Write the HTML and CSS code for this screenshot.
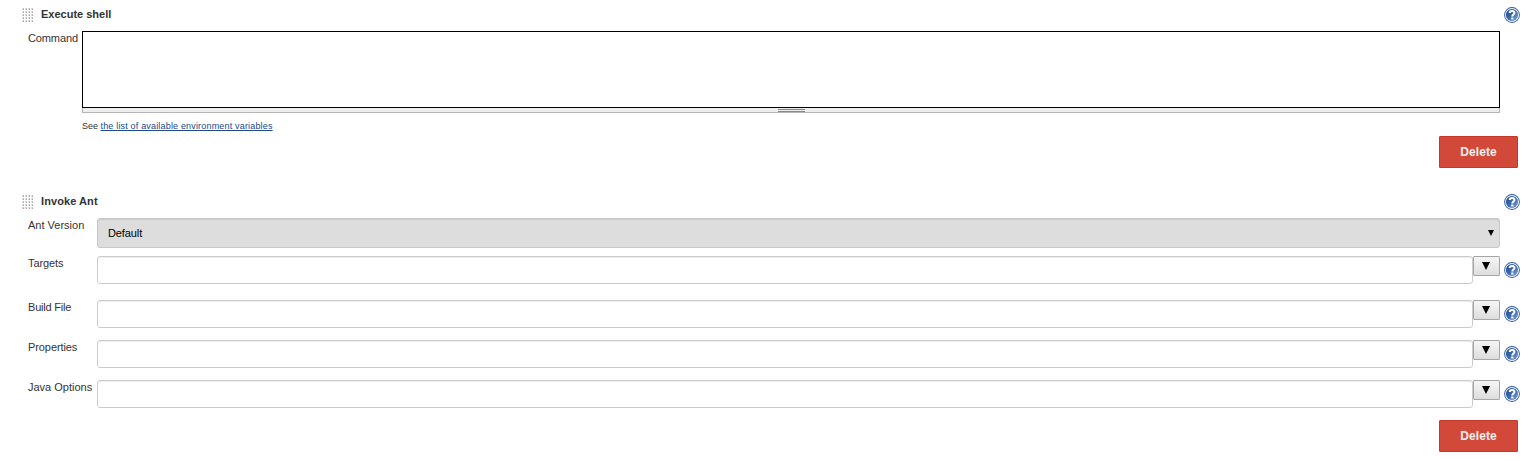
FILE: index.html
```html
<!DOCTYPE html>
<html lang="en">
<head>
<meta charset="utf-8">
<title>Build steps</title>
<link rel="stylesheet" href="styles.css">
</head>
<body>
<svg class="defs" width="0" height="0" aria-hidden="true">
  <defs>
    <linearGradient id="disc" x1="0" y1="0" x2="1" y2="1">
      <stop offset="0" stop-color="#1f4b8b"/>
      <stop offset=".45" stop-color="#3865a5"/>
      <stop offset="1" stop-color="#86a8d2"/>
    </linearGradient>
    <symbol id="help" viewBox="0 0 16 16">
      <circle cx="8" cy="8" r="7.900" fill="#2f5c9a"/>
      <circle cx="8" cy="8" r="7" fill="#f2f6fb"/>
      <circle cx="8" cy="8" r="6.100" fill="url(#disc)"/>
      <path d="M5.700 6C5.700 4.500 6.700 3.900 8.100 3.900c1.500 0 2.300.8 2.300 2 0 1.700-2.100 1.700-2.100 3.600" fill="none" stroke="#fff" stroke-width="2"/>
      <rect x="7.200" y="10.500" width="2.200" height="2" fill="#fff"/>
    </symbol>
    <symbol id="arrow" viewBox="0 0 8 8"><path d="M0 0h8L4 8z" fill="#000"/></symbol>
    <pattern id="dots" width="3" height="3" patternUnits="userSpaceOnUse">
      <rect width="2" height="2" fill="#dedede"/>
      <rect x="1" y="0" width="1" height="1" fill="#c4c4bc"/>
      <rect x="1" y="1" width="1" height="1" fill="#aaa"/>
    </pattern>
    <symbol id="grip" viewBox="0 0 12 14"><rect width="12" height="14" fill="url(#dots)"/></symbol>
  </defs>
</svg>
<main class="steps">
  <section class="step">
    <header class="step-head"><svg class="grip"><use href="#grip"/></svg><h2>Execute shell</h2><svg class="help"><use href="#help"/></svg></header>
    <div class="row shell">
      <label class="label" for="cmd">Command</label>
      <div class="control">
        <textarea id="cmd" class="command"></textarea>
        <div class="resizer"><span></span></div>
        <p class="note">See <a href="#">the list of available environment variables</a></p>
      </div>
    </div>
    <div class="actions"><button class="delete">Delete</button></div>
  </section>
  <section class="step ant">
    <header class="step-head"><svg class="grip"><use href="#grip"/></svg><h2>Invoke Ant</h2><svg class="help"><use href="#help"/></svg></header>
    <div class="row version">
      <span class="label">Ant Version</span>
      <div class="select"><span>Default</span><svg class="caret"><use href="#arrow"/></svg></div>
    </div>
    <div class="row targets">
      <label class="label tight" for="targets">Targets</label>
      <input id="targets" class="text"><button class="expand" aria-label="Expand"><svg><use href="#arrow"/></svg></button><svg class="help"><use href="#help"/></svg>
    </div>
    <div class="row">
      <label class="label tighter" for="file">Build File</label>
      <input id="file" class="text"><button class="expand" aria-label="Expand"><svg><use href="#arrow"/></svg></button><svg class="help"><use href="#help"/></svg>
    </div>
    <div class="row">
      <label class="label tight" for="props">Properties</label>
      <input id="props" class="text"><button class="expand" aria-label="Expand"><svg><use href="#arrow"/></svg></button><svg class="help"><use href="#help"/></svg>
    </div>
    <div class="row">
      <label class="label" for="opts">Java Options</label>
      <input id="opts" class="text"><button class="expand" aria-label="Expand"><svg><use href="#arrow"/></svg></button><svg class="help"><use href="#help"/></svg>
    </div>
    <div class="actions"><button class="delete">Delete</button></div>
  </section>
</main>
</body>
</html>
```

FILE: styles.css
```css
* { box-sizing: border-box; }
body {
  margin: 0;
  background: #fff;
  color: #333;
  font: 11px/14px "Liberation Sans", Arial, sans-serif;
}
.defs { display: block; }
.steps { padding: 7px 10px 0 22px; }
.step { height: 187px; }
.step.ant { height: auto; }
.step-head {
  display: flex;
  align-items: flex-start;
  height: 24px;
}
.step-head h2 {
  flex: 1;
  margin: 0 0 0 7px;
  font-size: 11px;
  line-height: 14px;
  font-weight: bold;
}
.ant h2 { letter-spacing: .08px; }
.grip {
  flex: none;
  width: 12px;
  height: 14px;
  margin-top: 1px;
}
.help {
  flex: none;
  width: 16px;
  height: 16px;
}
.row {
  display: flex;
  align-items: flex-start;
  height: 40px;
  padding-left: 6px;
}
.label {
  flex: none;
  width: 69px;
}
.tight { letter-spacing: -.09px; }
.tighter { letter-spacing: -.2px; }
.shell { height: 105px; padding-right: 20px; }
.shell .label { width: 54px; letter-spacing: -.12px; }
.control { flex: 1; }
.command {
  display: block;
  width: 100%;
  height: 77px;
  border: 1px solid #000;
  background: #fff;
  resize: none;
  outline: none;
}
.resizer {
  display: flex;
  justify-content: center;
  height: 5px;
  border: 1px solid #b5b5b5;
  border-top: 0;
  background: #eee;
}
.resizer span {
  width: 27px;
  height: 3px;
  margin-top: 1px;
  border: solid #888;
  border-width: 1px 0;
}
.note {
  margin: 6px 0 0;
  font-size: 9px;
  line-height: 14px;
}
.note a { color: #204a87; letter-spacing: .175px; }
.actions {
  display: flex;
  justify-content: flex-end;
  padding-right: 2px;
}
.delete {
  width: 79px;
  height: 32px;
  padding: 0;
  border: 1px solid #c0392b;
  border-radius: 1px;
  background: #d24939;
  color: #f5f0ee;
  font: bold 12px/16px "Liberation Sans", Arial, sans-serif;
  letter-spacing: .1px;
}
.version { height: 38px; padding-right: 20px; }
.targets { height: 44px; }
.select {
  display: flex;
  flex: 1;
  align-items: center;
  justify-content: space-between;
  height: 30px;
  padding: 0 5px 0 10px;
  border: 1px solid #c8c8c8;
  border-radius: 3px;
  background: #ddd;
  box-shadow: inset 0 1px 1px rgba(0, 0, 0, .075);
  color: #000;
  letter-spacing: -.1px;
}
.caret { width: 6px; height: 6px; }
.text {
  flex: 1;
  min-width: 0;
  height: 28px;
  border: 1px solid #ccc;
  border-radius: 3px;
  background: #fff;
  box-shadow: inset 0 1px 1px rgba(0, 0, 0, .075);
  outline: none;
}
.expand {
  display: flex;
  align-items: center;
  justify-content: center;
  width: 27px;
  height: 20px;
  margin-right: 4px;
  padding: 0 1px 0 0;
  border: 1px solid #a6a6a6;
  border-radius: 1px;
  background: linear-gradient(#f6f6f6, #ddd);
}
.expand svg { width: 8px; height: 8px; }
.row .help { margin-top: 6px; }
```
